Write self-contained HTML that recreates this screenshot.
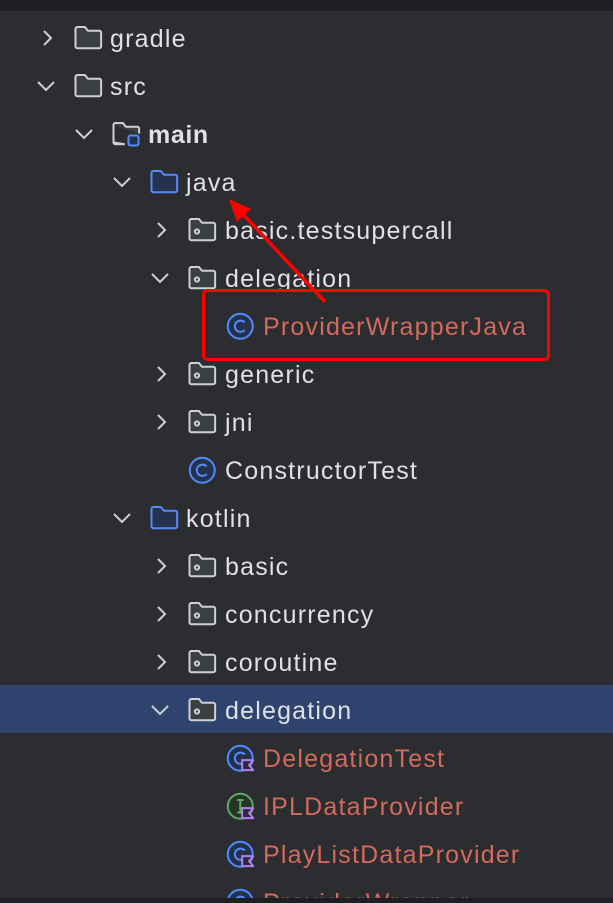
<!DOCTYPE html>
<html style="overflow:hidden;width:613px;height:903px"><head><meta charset="utf-8"><style>
html,body{margin:0;padding:0}
body{width:613px;height:903px;background:#2b2d30;position:relative;overflow:hidden;font-family:"Liberation Sans",sans-serif}
#w{position:absolute;left:0;top:0;width:613px;height:903px;overflow:hidden}
.top{position:absolute;left:0;top:0;width:613px;height:11px;background:#1e1f22}
.bot{position:absolute;left:0;top:898px;width:613px;height:5px;background:#1e1f22}
.sel{position:absolute;left:0;top:685px;width:613px;height:48px;background:#2e436e}
.t{position:absolute;font-size:25px;letter-spacing:1.2px;color:#dfe1e5;line-height:30px;white-space:nowrap}
.r{color:#d46a5c}
.b{font-weight:bold;letter-spacing:0.6px}
svg.i{position:absolute}
</style></head><body><div id="w">
<div class="top"></div>
<div class="sel"></div>
<svg width="0" height="0" style="position:absolute">
<defs>
<g id="folder"><path d="M2 5.5 a1.5 1.5 0 0 1 1.5-1.5 h6 l2.5 3 h9 a1.5 1.5 0 0 1 1.5 1.5 v11 a1.5 1.5 0 0 1-1.5 1.5 h-17.5 a1.5 1.5 0 0 1-1.5-1.5z" fill="#3c3f41" stroke="#ced0d6" stroke-width="1.6"/></g>
<g id="bfolder"><path d="M2 5.5 a1.5 1.5 0 0 1 1.5-1.5 h6 l2.5 3 h9 a1.5 1.5 0 0 1 1.5 1.5 v11 a1.5 1.5 0 0 1-1.5 1.5 h-17.5 a1.5 1.5 0 0 1-1.5-1.5z" fill="#25324d" stroke="#548af7" stroke-width="1.6"/></g>
<g id="pkg"><path d="M2 5.5 a1.5 1.5 0 0 1 1.5-1.5 h6 l2.5 3 h9 a1.5 1.5 0 0 1 1.5 1.5 v11 a1.5 1.5 0 0 1-1.5 1.5 h-17.5 a1.5 1.5 0 0 1-1.5-1.5z" fill="#3c3f41" stroke="#ced0d6" stroke-width="1.6"/><circle cx="8" cy="14" r="1.7" fill="none" stroke="#ced0d6" stroke-width="1.6"/></g>
<g id="src"><path d="M2 5.5 a1.5 1.5 0 0 1 1.5-1.5 h6 l2.5 3 h9 a1.5 1.5 0 0 1 1.5 1.5 v4 M11 21 h-7.5 a1.5 1.5 0 0 1-1.5-1.5z M2 5.5 v14" fill="#3c3f41" stroke="#ced0d6" stroke-width="1.6"/><rect x="14" y="14" width="8" height="8" rx="1.6" fill="#25324d" stroke="#548af7" stroke-width="1.6"/></g>
<g id="cls"><circle cx="13" cy="13" r="10" fill="#25324d" stroke="#548af7" stroke-width="1.6"/><path d="M16.5 10 a4.5 4.5 0 1 0 0 6" fill="none" stroke="#548af7" stroke-width="1.6"/></g>
<g id="kcls"><circle cx="13" cy="13" r="10" fill="#25324d" stroke="#548af7" stroke-width="1.6"/><path d="M16.5 10 a4.5 4.5 0 1 0 0 6" fill="none" stroke="#548af7" stroke-width="1.6"/><path d="M14.5 14.5 h9 l-3.5 4 3.5 4 h-9z" fill="#2b2d30" stroke="#b27ff7" stroke-width="1.6"/></g>
<g id="kint"><circle cx="13" cy="13" r="10" fill="#253627" stroke="#5fa866" stroke-width="1.6"/><path d="M10.5 8 h5 M13 8 v10 M10.5 18 h5" fill="none" stroke="#5fa866" stroke-width="1.6"/><path d="M14.5 14.5 h9 l-3.5 4 3.5 4 h-9z" fill="#2b2d30" stroke="#b27ff7" stroke-width="1.6"/></g>
<g id="chr"><path d="M8 4 l7 7 -7 7" fill="none" stroke="#ced0d6" stroke-width="2"/></g>
<g id="chd"><path d="M3 7 l8 8 8-8" fill="none" stroke="#ced0d6" stroke-width="2"/></g>
</defs></svg>

<!-- chevrons -->
<svg class="i" style="left:36px;top:27px" width="24" height="24"><use href="#chr"/></svg>
<svg class="i" style="left:35px;top:75px" width="24" height="24"><use href="#chd"/></svg>
<svg class="i" style="left:73px;top:123px" width="24" height="24"><use href="#chd"/></svg>
<svg class="i" style="left:111px;top:171px" width="24" height="24"><use href="#chd"/></svg>
<svg class="i" style="left:150px;top:219px" width="24" height="24"><use href="#chr"/></svg>
<svg class="i" style="left:149px;top:267px" width="24" height="24"><use href="#chd"/></svg>
<svg class="i" style="left:150px;top:363px" width="24" height="24"><use href="#chr"/></svg>
<svg class="i" style="left:150px;top:411px" width="24" height="24"><use href="#chr"/></svg>
<svg class="i" style="left:111px;top:507px" width="24" height="24"><use href="#chd"/></svg>
<svg class="i" style="left:150px;top:555px" width="24" height="24"><use href="#chr"/></svg>
<svg class="i" style="left:150px;top:603px" width="24" height="24"><use href="#chr"/></svg>
<svg class="i" style="left:150px;top:651px" width="24" height="24"><use href="#chr"/></svg>
<svg class="i" style="left:149px;top:699px" width="24" height="24"><use href="#chd"/></svg>

<!-- icons -->
<svg class="i" style="left:73px;top:22px" width="30" height="30" viewBox="0 0 24 24"><use href="#folder"/></svg>
<svg class="i" style="left:73px;top:70px" width="30" height="30" viewBox="0 0 24 24"><use href="#folder"/></svg>
<svg class="i" style="left:111px;top:118px" width="30" height="30" viewBox="0 0 24 24"><use href="#src"/></svg>
<svg class="i" style="left:149px;top:166px" width="30" height="30" viewBox="0 0 24 24"><use href="#bfolder"/></svg>
<svg class="i" style="left:187px;top:214px" width="30" height="30" viewBox="0 0 24 24"><use href="#pkg"/></svg>
<svg class="i" style="left:187px;top:262px" width="30" height="30" viewBox="0 0 24 24"><use href="#pkg"/></svg>
<svg class="i" style="left:224px;top:310px" width="30" height="30" viewBox="0 0 24 24"><use href="#cls"/></svg>
<svg class="i" style="left:187px;top:358px" width="30" height="30" viewBox="0 0 24 24"><use href="#pkg"/></svg>
<svg class="i" style="left:187px;top:406px" width="30" height="30" viewBox="0 0 24 24"><use href="#pkg"/></svg>
<svg class="i" style="left:186px;top:454px" width="30" height="30" viewBox="0 0 24 24"><use href="#cls"/></svg>
<svg class="i" style="left:149px;top:502px" width="30" height="30" viewBox="0 0 24 24"><use href="#bfolder"/></svg>
<svg class="i" style="left:187px;top:550px" width="30" height="30" viewBox="0 0 24 24"><use href="#pkg"/></svg>
<svg class="i" style="left:187px;top:598px" width="30" height="30" viewBox="0 0 24 24"><use href="#pkg"/></svg>
<svg class="i" style="left:187px;top:646px" width="30" height="30" viewBox="0 0 24 24"><use href="#pkg"/></svg>
<svg class="i" style="left:187px;top:694px" width="30" height="30" viewBox="0 0 24 24"><use href="#pkg"/></svg>
<svg class="i" style="left:224px;top:742px" width="30" height="30" viewBox="0 0 24 24"><use href="#kcls"/></svg>
<svg class="i" style="left:224px;top:790px" width="30" height="30" viewBox="0 0 24 24"><use href="#kint"/></svg>
<svg class="i" style="left:224px;top:838px" width="30" height="30" viewBox="0 0 24 24"><use href="#kcls"/></svg>
<svg class="i" style="left:224px;top:886px" width="30" height="30" viewBox="0 0 24 24"><use href="#kcls"/></svg>

<!-- text -->
<div class="t" style="left:110px;top:24px">gradle</div>
<div class="t" style="left:110px;top:72px">src</div>
<div class="t b" style="left:148px;top:120px">main</div>
<div class="t" style="left:186px;top:168px">java</div>
<div class="t" style="left:225px;top:216px">basic.testsupercall</div>
<div class="t" style="left:225px;top:264px">delegation</div>
<div class="t r" style="left:263px;top:312px">ProviderWrapperJava</div>
<div class="t" style="left:225px;top:360px">generic</div>
<div class="t" style="left:225px;top:408px">jni</div>
<div class="t" style="left:225px;top:456px">ConstructorTest</div>
<div class="t" style="left:186px;top:504px">kotlin</div>
<div class="t" style="left:225px;top:552px">basic</div>
<div class="t" style="left:225px;top:600px">concurrency</div>
<div class="t" style="left:225px;top:648px">coroutine</div>
<div class="t" style="left:225px;top:696px">delegation</div>
<div class="t r" style="left:263px;top:744px">DelegationTest</div>
<div class="t r" style="left:263px;top:792px">IPLDataProvider</div>
<div class="t r" style="left:263px;top:840px">PlayListDataProvider</div>
<div class="t r" style="left:263px;top:888px">ProviderWrapper</div>

<!-- annotation -->
<svg class="i" style="left:0;top:0" width="613" height="903">
<rect x="203.5" y="290.5" width="345" height="69" rx="4" fill="none" stroke="#ff0000" stroke-width="3"/>
<line x1="325" y1="302" x2="240" y2="211" stroke="#ff0000" stroke-width="3.5"/>
<path d="M229 199 L251 209 L237 222 Z" fill="#ff0000"/>
</svg>
<div class="bot"></div>
</div></body></html>
